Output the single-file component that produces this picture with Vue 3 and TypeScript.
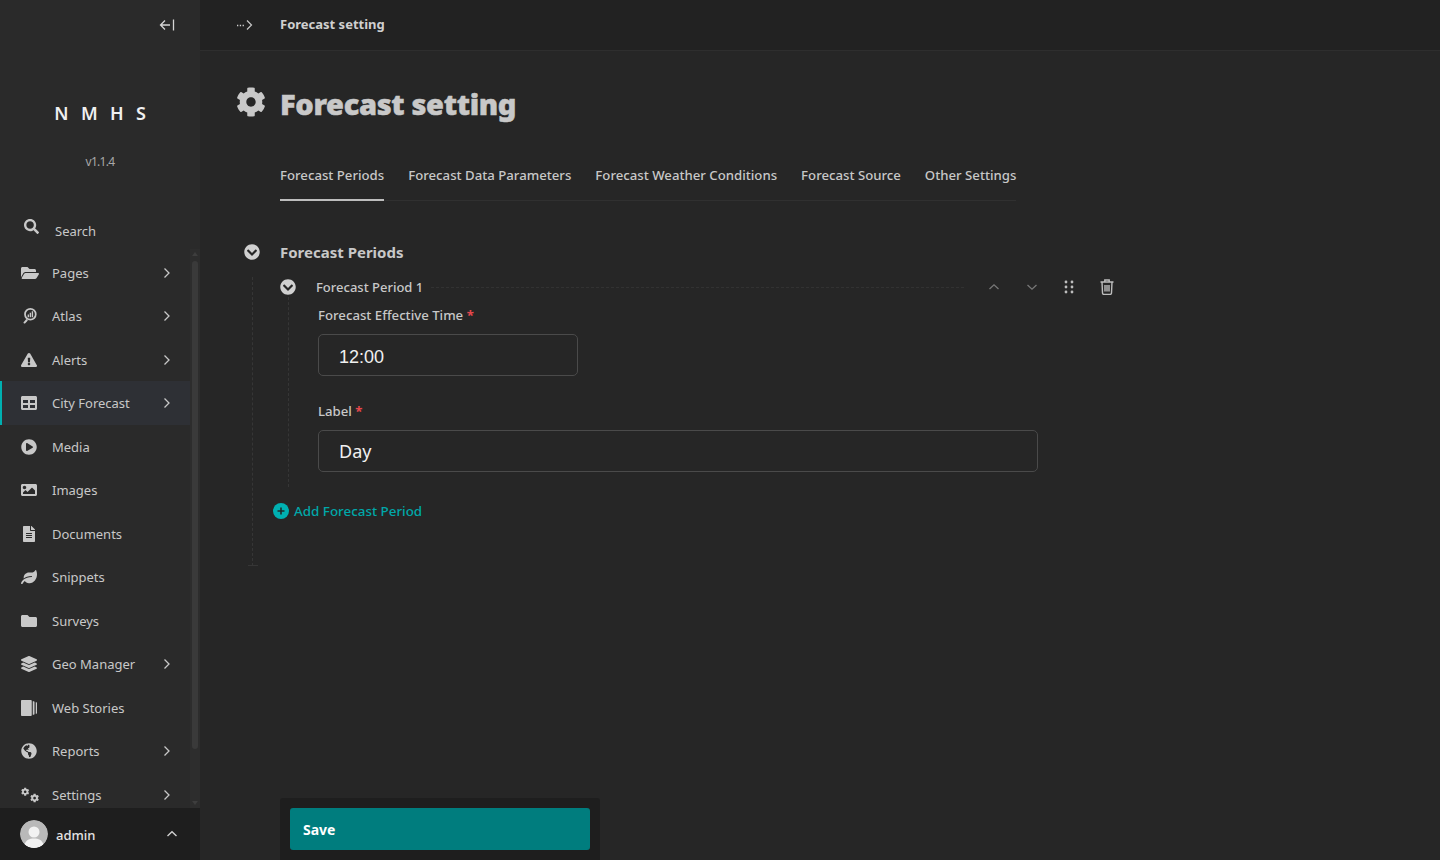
<script setup lang="ts">
interface NavItem {
  label: string
  arrow?: boolean
  active?: boolean
  vb: string
  w: number
  paths: { d: string; t?: string }[]
}

const cog = 'M487.4 315.7l-42.6-24.6c4.3-23.2 4.3-47 0-70.2l42.6-24.6c4.9-2.8 7.1-8.6 5.5-14-11.1-35.6-30-67.8-54.7-94.6-3.8-4.1-10-5.1-14.8-2.3L380.8 110c-17.9-15.4-38.5-27.3-60.8-35.1V25.8c0-5.6-3.9-10.5-9.4-11.7-36.7-8.2-74.3-7.8-109.2 0-5.5 1.2-9.4 6.1-9.4 11.7V75c-22.2 7.9-42.8 19.8-60.8 35.1L88.7 85.5c-4.9-2.8-11-1.9-14.8 2.3-24.7 26.7-43.6 58.9-54.7 94.6-1.7 5.4.6 11.2 5.5 14L67.3 221c-4.3 23.2-4.3 47 0 70.2l-42.6 24.6c-4.9 2.8-7.1 8.6-5.5 14 11.1 35.6 30 67.8 54.7 94.6 3.8 4.1 10 5.1 14.8 2.3l42.6-24.6c17.9 15.4 38.5 27.3 60.8 35.1v49.2c0 5.6 3.9 10.5 9.4 11.7 36.7 8.2 74.3 7.8 109.2 0 5.5-1.2 9.4-6.1 9.4-11.7v-49.2c22.2-7.9 42.8-19.8 60.8-35.1l42.6 24.6c4.9 2.8 11 1.9 14.8-2.3 24.7-26.7 43.6-58.9 54.7-94.6 1.5-5.5-.7-11.3-5.6-14.1zM256 336c-44.1 0-80-35.9-80-80s35.9-80 80-80 80 35.9 80 80-35.9 80-80 80z'
const search = 'M505 442.7L405.3 343c-4.5-4.5-10.6-7-17-7H372c27.6-35.3 44-79.7 44-128C416 93.1 322.9 0 208 0S0 93.1 0 208s93.1 208 208 208c48.3 0 92.7-16.4 128-44v16.3c0 6.4 2.5 12.5 7 17l99.7 99.7c9.4 9.4 24.6 9.4 33.9 0l28.3-28.3c9.4-9.4 9.4-24.6.1-34zM208 336c-70.7 0-128-57.2-128-128 0-70.7 57.2-128 128-128 70.7 0 128 57.2 128 128 0 70.7-57.2 128-128 128z'
const chevronCircle = 'M504 256c0 137-111 248-248 248S8 393 8 256 119 8 256 8s248 111 248 248zM273 369.9l135.5-135.5c9.4-9.4 9.4-24.6 0-33.9l-17-17c-9.4-9.4-24.6-9.4-33.9 0L256 285.1 154.4 183.5c-9.4-9.4-24.6-9.4-33.9 0l-17 17c-9.4 9.4-9.4 24.6 0 33.9L239 369.9c9.4 9.4 24.6 9.4 34 0z'

const navItems: NavItem[] = [
  { label: 'Pages', arrow: true, vb: '0 0 576 512', w: 18, paths: [{ d: 'M572.694 292.093L500.27 416.248A63.997 63.997 0 0 1 444.989 448H45.025c-18.523 0-30.064-20.093-20.731-36.093l72.424-124.155A64 64 0 0 1 152 256h399.964c18.523 0 30.064 20.093 20.73 36.093zM152 224h328v-48c0-26.51-21.49-48-48-48H272l-64-64H48C21.49 64 0 85.49 0 112v278.046l69.077-118.418C86.214 242.25 117.989 224 152 224z' }] },
  { label: 'Atlas', arrow: true, vb: '0 0 512 512', w: 16, paths: [{ d: 'M200 0a200 200 0 1 1 0 400 200 200 0 0 1 0-400zm0 56a144 144 0 1 0 0 288 144 144 0 0 0 0-288zM112 210h44v86h-44zM178 150h44v146h-44zM244 100h44v196h-44zM70 352l50 50L36 490c-12 12-32 12-46 0s-12-32 0-46z', t: 'translate(100 0)' }] },
  { label: 'Alerts', arrow: true, vb: '0 0 576 512', w: 16, paths: [{ d: 'M569.517 440.013C587.975 472.007 564.806 512 527.94 512H48.054c-36.937 0-59.999-40.055-41.577-71.987L246.423 24.987c18.467-32.009 64.72-31.951 83.154 0l239.94 416.026zM288 354c-25.405 0-46 20.595-46 46s20.595 46 46 46 46-20.595 46-46-20.595-46-46-46zm-43.673-165.346l7.418 136c.347 6.364 5.609 11.346 11.982 11.346h48.546c6.373 0 11.635-4.982 11.982-11.346l7.418-136c.375-6.874-5.098-12.654-11.982-12.654h-63.383c-6.884 0-12.356 5.78-11.981 12.654z' }] },
  { label: 'City Forecast', arrow: true, active: true, vb: '0 0 512 512', w: 16, paths: [{ d: 'M464 32H48C21.49 32 0 53.49 0 80v352c0 26.51 21.49 48 48 48h416c26.51 0 48-21.49 48-48V80c0-26.51-21.49-48-48-48zM224 416H64v-96h160v96zm0-160H64v-96h160v96zm224 160H288v-96h160v96zm0-160H288v-96h160v96z' }] },
  { label: 'Media', vb: '0 0 512 512', w: 16, paths: [{ d: 'M256 8C119 8 8 119 8 256s111 248 248 248 248-111 248-248S393 8 256 8zm115.7 272l-176 101c-15.8 8.8-35.7-2.5-35.7-21V152c0-18.4 19.8-29.8 35.7-21l176 107c16.4 9.2 16.4 32.9 0 42z' }] },
  { label: 'Images', vb: '0 0 512 512', w: 16, paths: [{ d: 'M464 448H48c-26.51 0-48-21.49-48-48V112c0-26.51 21.49-48 48-48h416c26.51 0 48 21.49 48 48v288c0 26.51-21.49 48-48 48zM112 120c-30.928 0-56 25.072-56 56s25.072 56 56 56 56-25.072 56-56-25.072-56-56-56zM64 384h384V272l-87.515-87.515c-4.686-4.686-12.284-4.686-16.971 0L208 320l-55.515-55.515c-4.686-4.686-12.284-4.686-16.971 0L64 336v48z' }] },
  { label: 'Documents', vb: '0 0 384 512', w: 16, paths: [{ d: 'M224 136V0H24C10.7 0 0 10.7 0 24v464c0 13.3 10.7 24 24 24h336c13.3 0 24-10.7 24-24V160H248c-13.2 0-24-10.8-24-24zm64 236c0 6.6-5.4 12-12 12H108c-6.6 0-12-5.4-12-12v-8c0-6.6 5.4-12 12-12h168c6.6 0 12 5.4 12 12v8zm0-64c0 6.6-5.4 12-12 12H108c-6.6 0-12-5.4-12-12v-8c0-6.6 5.4-12 12-12h168c6.6 0 12 5.4 12 12v8zm0-72v8c0 6.6-5.4 12-12 12H108c-6.6 0-12-5.4-12-12v-8c0-6.6 5.4-12 12-12h168c6.6 0 12 5.4 12 12zm96-114.1v6.1H256V0h6.1c6.4 0 12.5 2.5 17 7l97.9 98c4.5 4.5 7 10.6 7 16.9z' }] },
  { label: 'Snippets', vb: '0 0 576 512', w: 16, paths: [{ d: 'M546.2 9.7c-5.6-12.5-21.6-13-28.3-1.2C486.9 62.4 431.4 96 368 96h-80C182 96 96 182 96 288c0 7 .8 13.7 1.5 20.5C161.3 262.8 253.4 224 384 224c8.8 0 16 7.2 16 16s-7.2 16-16 16C132.6 256 26 410.1 2.4 468c-6.6 16.3 1.2 34.9 17.5 41.6 16.4 6.8 35-1.1 41.8-17.3 1.5-3.6 20.9-47.9 71.9-90.6 32.4 43.9 94 85.8 174.9 77.2C465.5 467.5 576 326.7 576 154.3c0-50.2-10.8-102.2-29.8-144.6z' }] },
  { label: 'Surveys', vb: '0 0 512 512', w: 16, paths: [{ d: 'M464 128H272l-64-64H48C21.49 64 0 85.49 0 112v288c0 26.51 21.49 48 48 48h416c26.51 0 48-21.49 48-48V176c0-26.51-21.49-48-48-48z' }] },
  { label: 'Geo Manager', arrow: true, vb: '0 0 512 512', w: 16, paths: [{ d: 'M12.41 148.02l232.94 105.67c6.8 3.09 14.49 3.09 21.29 0l232.94-105.67c16.55-7.51 16.55-32.52 0-40.03L266.65 2.31a25.607 25.607 0 0 0-21.29 0L12.41 107.98c-16.55 7.51-16.55 32.53 0 40.04zm487.18 88.28l-58.09-26.33-161.64 73.27c-7.56 3.43-15.59 5.17-23.86 5.17s-16.29-1.74-23.86-5.17L70.51 209.97l-58.1 26.33c-16.55 7.5-16.55 32.5 0 40l232.94 105.59c6.8 3.08 14.49 3.08 21.29 0L499.59 276.3c16.55-7.5 16.55-32.5 0-40zm0 127.8l-57.87-26.23-161.86 73.37c-7.56 3.43-15.59 5.17-23.86 5.17s-16.29-1.74-23.86-5.17L70.29 337.87 12.41 364.1c-16.55 7.5-16.55 32.5 0 40l232.94 105.59c6.8 3.08 14.49 3.08 21.29 0L499.59 404.1c16.55-7.5 16.55-32.5 0-40z' }] },
  { label: 'Web Stories', vb: '0 0 512 512', w: 16, paths: [{ d: 'M32 0h280c17 0 32 15 32 32v448c0 17-15 32-32 32H32c-17 0-32-15-32-32V32C0 15 15 0 32 0zM376 40h32c14 0 24 10 24 24v384c0 14-10 24-24 24h-32zM472 72h24c9 0 16 7 16 16v336c0 9-7 16-16 16h-24z' }] },
  { label: 'Reports', arrow: true, vb: '0 0 496 512', w: 16, paths: [{ d: 'M248 8C111.03 8 0 119.03 0 256s111.03 248 248 248 248-111.03 248-248S384.97 8 248 8zm82.29 357.6c-3.9 3.88-7.99 7.95-11.31 11.28-2.99 3-5.1 6.7-6.17 10.71-1.51 5.66-2.73 11.38-4.77 16.87l-17.39 46.85c-13.76 3-28 4.69-42.65 4.69v-27.38c1.69-12.62-7.64-36.26-22.63-51.25-6-6-9.37-14.14-9.37-22.63v-32.01c0-11.64-6.27-22.34-16.46-27.97-14.37-7.95-34.81-19.06-48.81-26.11-11.48-5.78-22.1-13.14-31.65-21.75l-.8-.72a114.792 114.792 0 0 1-18.06-20.74c-9.38-13.77-24.66-36.42-34.59-51.14 20.47-45.5 57.36-82.04 103.2-101.89l24.01 12.01C203.48 89.74 216 82.01 216 70.11v-11.3c7.99-1.29 16.12-2.11 24.45-2.45l28.3 28.3c6.25 6.25 6.25 16.38 0 22.63L264 112l-10.34 10.34c-3.12 3.12-3.12 8.19 0 11.31l4.69 4.69c3.12 3.12 3.12 8.19 0 11.31l-8 8a8.008 8.008 0 0 1-5.66 2.34h-8.99c-2.08 0-4.08.81-5.58 2.27l-9.92 9.65a8.008 8.008 0 0 0-1.58 9.31l15.59 31.19c2.66 5.32-1.21 11.58-7.15 11.58h-5.64c-1.93 0-3.79-.7-5.24-1.96l-9.28-8.06a16.017 16.017 0 0 0-15.55-3.1l-31.17 10.39a11.95 11.95 0 0 0-8.17 11.34c0 4.53 2.56 8.66 6.61 10.69l11.08 5.54c9.41 4.71 19.79 7.16 30.31 7.16s22.59 27.29 32 32h50.75c8.49 0 16.62 3.37 22.63 9.37l13.69 13.69a30.503 30.503 0 0 1 8.93 21.57 46.536 46.536 0 0 1-13.72 32.98z' }] },
  { label: 'Settings', arrow: true, vb: '0 0 640 512', w: 18, paths: [{ d: cog, t: 'translate(0 -10) scale(.58)' }, { d: cog, t: 'translate(325 205) scale(.62)' }] },
]

const tabs = ['Forecast Periods', 'Forecast Data Parameters', 'Forecast Weather Conditions', 'Forecast Source', 'Other Settings']
</script>

<template>
  <div class="shell">
    <aside class="sidebar">
      <div class="collapse-row">
        <svg class="collapse-icon" viewBox="0 0 16 14" fill="none" stroke="currentColor" stroke-width="1.3">
          <path d="M6 2.5 1.5 7 6 11.5M1.5 7H11M14.5 1.5v11" />
        </svg>
      </div>
      <div class="logo">N M H S</div>
      <div class="version">v1.1.4</div>
      <div class="search-row">
        <svg class="search-icon" viewBox="0 0 512 512"><path :d="search" fill="currentColor" /></svg>
        <span>Search</span>
      </div>
      <div class="nav-wrap">
        <nav class="nav">
          <a v-for="item in navItems" :key="item.label" class="nav-item" :class="{ active: item.active }">
            <span class="nav-icon">
              <svg :viewBox="item.vb" :width="item.w" height="16">
                <path v-for="(p, i) in item.paths" :key="i" :d="p.d" :transform="p.t" fill="currentColor" />
              </svg>
            </span>
            <span class="nav-label">{{ item.label }}</span>
            <svg v-if="item.arrow" class="nav-arrow" viewBox="0 0 8 12" fill="none" stroke="currentColor" stroke-width="1.3">
              <path d="M1.5 1.5 6 6l-4.5 4.5" />
            </svg>
          </a>
        </nav>
        <div class="scroll-track">
          <span class="scroll-up"></span>
          <div class="scroll-thumb"></div>
          <span class="scroll-down"></span>
        </div>
      </div>
      <div class="account">
        <div class="avatar">
          <svg viewBox="0 0 28 28" width="28" height="28">
            <circle cx="14" cy="14" r="14" fill="#b9b9b9" />
            <circle cx="14" cy="12" r="5.5" fill="#f2f2f2" />
            <path d="M4.5 24.5c1.5-4.500 5-6 9.500-6s8 1.500 9.500 6a14 14 0 0 1-19 0z" fill="#f2f2f2" />
          </svg>
        </div>
        <span class="account-name">admin</span>
        <svg class="account-caret" viewBox="0 0 12 8" fill="none" stroke="currentColor" stroke-width="1.4">
          <path d="M1.500 6 6 1.800 10.500 6" />
        </svg>
      </div>
    </aside>

    <main class="main">
      <header class="topbar">
        <span class="crumb-more">
          <svg viewBox="0 0 18 12" width="18" height="12" fill="none">
            <path d="M1 6.500h1.300M3.800 6.500h1.300M6.600 6.500h1.300" stroke="#d0d0d0" stroke-width="1.700" />
            <path d="M11 1.500 15.500 6 11 10.500" stroke="#c8c8c8" stroke-width="1.200" />
          </svg>
        </span>
        <span class="crumb">Forecast setting</span>
      </header>

      <div class="title-row">
        <svg class="title-icon" viewBox="0 0 512 512"><path :d="cog" fill="currentColor" /></svg>
        <h1>Forecast setting</h1>
      </div>

      <div class="tabs">
        <a v-for="(tab, i) in tabs" :key="tab" class="tab" :class="{ current: i === 0 }">{{ tab }}</a>
      </div>

      <section class="section">
        <div class="section-head">
          <svg class="toggle" viewBox="0 0 512 512"><path :d="chevronCircle" fill="currentColor" /></svg>
          <h2>Forecast Periods</h2>
        </div>
        <div class="section-body">
          <div class="period-head">
            <svg class="toggle" viewBox="0 0 512 512"><path :d="chevronCircle" fill="currentColor" /></svg>
            <span class="period-title">Forecast Period 1</span>
            <span class="period-rule"></span>
            <div class="period-actions">
              <svg class="act dim" viewBox="0 0 12 8" fill="none" stroke="currentColor" stroke-width="1.300"><path d="M1.500 6 6 1.800 10.500 6" /></svg>
              <svg class="act dim" viewBox="0 0 12 8" fill="none" stroke="currentColor" stroke-width="1.300"><path d="M1.500 2 6 6.200 10.500 2" /></svg>
              <svg class="act drag" viewBox="0 0 10 14" fill="currentColor">
                <circle cx="2" cy="2" r="1.400" /><circle cx="8" cy="2" r="1.400" />
                <circle cx="2" cy="7" r="1.400" /><circle cx="8" cy="7" r="1.400" />
                <circle cx="2" cy="12" r="1.400" /><circle cx="8" cy="12" r="1.400" />
              </svg>
              <svg class="act trash" viewBox="0 0 14 16" fill="none" stroke="currentColor" stroke-width="1.400">
                <path d="M.5 3h13M4.800 3V1h4.400v2M2 3l.5 11c0 .8.600 1.400 1.400 1.400h6.200c.8 0 1.400-.6 1.400-1.400L12 3M5 6v6.500M7 6v6.500M9 6v6.500" />
              </svg>
            </div>
          </div>
          <div class="period-body">
            <label class="field-label">Forecast Effective Time <em>*</em></label>
            <div class="field short">12:00</div>
            <label class="field-label">Label <em>*</em></label>
            <div class="field wide">Day</div>
          </div>
          <a class="add-link">
            <svg viewBox="0 0 16 16" width="16" height="16">
              <circle cx="8" cy="8" r="8" fill="#00b0b1" />
              <path d="M8 4.500v7M4.500 8h7" stroke="#1f2b2b" stroke-width="1.600" />
            </svg>
            Add Forecast Period
          </a>
        </div>
      </section>

      <footer class="save-bar">
        <button class="save-btn">Save</button>
      </footer>
    </main>
  </div>
</template>

<style>
html, body { margin: 0; background: #262626; }
</style>

<style scoped>
.shell { display: flex; height: 860px; overflow: hidden; font-family: "Noto Sans", "Open Sans", sans-serif; color: #c8c8c8; }

.sidebar { width: 200px; flex: none; display: flex; flex-direction: column; background: #2a2a2a; }
.collapse-row { height: 50px; display: flex; justify-content: flex-end; align-items: center; padding-right: 25px; box-sizing: border-box; }
.collapse-icon { width: 16px; height: 14px; color: #d5d5d5; }
.logo { margin-top: 50px; padding-left: 4px; height: 26px; line-height: 26px; text-align: center; color: #f0f0f0; font-size: 18px; font-weight: 600; letter-spacing: 3.850px; }
.version { margin-top: 27px; text-align: center; font-size: 12px; color: #a8a8a8; letter-spacing: -.7px; line-height: 18px; }
.search-row { margin-top: 38px; height: 40px; display: flex; align-items: center; gap: 16px; padding-left: 24px; font-size: 13px; color: #c8c8c8; }
.search-row span { margin-top: 4px; }
.search-icon { width: 15px; height: 15px; margin-top: -5px; color: #c8c8c8; }

.nav-wrap { flex: 1; display: flex; min-height: 0; }
.nav { width: 190px; flex: none; overflow: hidden; padding-top: 1.500px; }
.nav-item { display: flex; align-items: center; height: 43.500px; box-sizing: border-box; padding: 1px 0 0 21px; font-size: 13px; color: #c8c8c8; }
.nav-item.active { background: #2e3035; box-shadow: inset 2px 0 0 #00b0b1; }
.nav-icon { width: 31px; flex: none; display: flex; align-items: center; }
.nav-label { flex: 1; }
.nav-arrow { width: 8px; height: 12px; margin-right: 19px; color: #c8c8c8; }
.scroll-track { width: 10px; background: #2d2d2d; display: flex; flex-direction: column; align-items: center; padding: 3px 0; box-sizing: border-box; }
.scroll-up { border: 3px solid transparent; border-top: 0; border-bottom: 4px solid #3e3e3e; }
.scroll-down { margin-top: auto; border: 3px solid transparent; border-bottom: 0; border-top: 4px solid #3e3e3e; }
.scroll-thumb { width: 6px; height: 488px; margin-top: 5px; background: #3a3a3a; border-radius: 3px; }

.account { height: 52px; flex: none; background: #1e1e1e; display: flex; align-items: center; padding-left: 20px; }
.avatar { width: 28px; height: 28px; border-radius: 50%; overflow: hidden; }
.account-name { margin: 1px 0 0 8px; font-size: 13px; font-weight: 500; color: #e4e4e4; flex: 1; }
.account-caret { width: 12px; height: 8px; margin-right: 22px; color: #d0d0d0; }

.main { flex: 1; position: relative; background: #262626; min-width: 0; }
.topbar { height: 51px; box-sizing: border-box; background: #222; border-bottom: 1px solid #2e2e2e; display: flex; align-items: center; padding-left: 36px; }
.crumb-more { width: 44px; display: flex; }
.crumb { font-size: 13px; font-weight: 700; color: #d0d0d0; margin-top: -3px; }

.title-row { display: flex; align-items: flex-start; margin: 36px 0 0 36px; height: 40px; }
.title-icon { width: 30px; height: 30px; flex: none; color: #c8c8c8; margin-right: 14px; }
.title-row h1 { margin: 0; font-size: 29px; line-height: 34px; font-weight: 900; letter-spacing: -.35px; -webkit-text-stroke: .5px #c8c8c8; color: #c8c8c8; }

.tabs { display: inline-flex; gap: 24px; margin: 32px 0 0 80px; border-bottom: 1px solid #303030; }
.tab { font-size: 13.200px; font-weight: 500; line-height: 18px; padding: 7px 0 15px; color: #c8c8c8; margin-bottom: -1px; border-bottom: 2px solid transparent; }
.tab.current { border-bottom-color: #bdbdbd; }

.section { margin: 40px 0 0 44px; }
.section-head { display: flex; align-items: center; gap: 20px; height: 22px; }
.section-head h2 { margin: 0; font-size: 15px; font-weight: 700; color: #c8c8c8; }
.toggle { width: 16px; height: 16px; flex: none; color: #d0d0d0; }
.section-body { position: relative; margin: 14px 0 0 8px; padding: 0 0 48px 27px; height: 241px; width: 834px; box-sizing: content-box; border-left: 1px dashed #363636; }
.section-body::after { content: ""; position: absolute; left: -5px; bottom: 0; width: 10px; border-bottom: 1px solid #363636; }

.period-head { display: flex; align-items: center; height: 20px; }
.period-head .toggle { margin-right: 20px; }
.period-title { font-size: 13px; font-weight: 500; color: #c8c8c8; }
.period-rule { flex: 1; margin: 0 24px 0 8px; border-top: 1px dashed #323232; }
.period-actions { display: flex; align-items: center; gap: 26px; }
.act.dim { width: 12px; height: 8px; color: #777; }
.act.drag { width: 10px; height: 14px; color: #bdbdbd; }
.act.trash { width: 14px; height: 16px; color: #bdbdbd; }

.period-body { margin: 0 0 0 8px; border-left: 1px dashed #363636; padding: 9px 0 17px 29px; height: 164px; box-sizing: content-box; }
.field-label { display: block; font-size: 13.200px; font-weight: 500; line-height: 18px; color: #c8c8c8; }
.field-label em { font-style: normal; font-weight: 700; color: #e5484d; }
.field { box-sizing: border-box; height: 42px; margin: 10px 0 26px; padding: 0 20px; display: flex; align-items: center; border: 1px solid #4a4a4a; border-radius: 5px; background: #262626; color: #f0f0f0; font-size: 18px; }
.field.short { width: 260px; padding-top: 5px; font-family: "Liberation Sans", sans-serif; }
.field.wide { width: 720px; margin-bottom: 0; }

.add-link { display: inline-flex; align-items: center; gap: 5px; margin: 15px 0 0 -7px; font-size: 13.400px; font-weight: 500; color: #00a8a9; }

.save-bar { position: absolute; left: 80px; bottom: 0; width: 320px; height: 62px; box-sizing: border-box; padding: 10px; background: #1e1e1e; border-radius: 3px 3px 0 0; }
.save-btn { display: block; width: 300px; height: 42px; padding: 0 13px; text-align: left; background: #007d7e; border: none; border-radius: 3px; color: #fff; font: 700 14px "Noto Sans", sans-serif; }
</style>
